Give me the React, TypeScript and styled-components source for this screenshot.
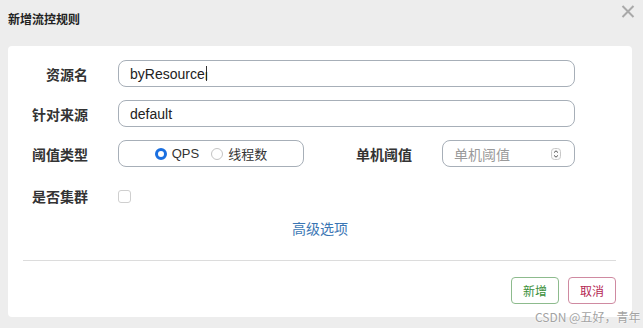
import React from 'react';
import styled, { createGlobalStyle } from 'styled-components';

const GlobalStyle = createGlobalStyle`
  html, body {
    margin: 0;
    padding: 0;
    background: #ededed;
  }
  body {
    font-family: "Liberation Sans", "Noto Sans CJK SC", sans-serif;
    color: #333;
  }
`;

const Dialog = styled.div`
  position: relative;
  width: 643px;
  height: 328px;
  box-sizing: border-box;
  padding: 0 11px 0 8px;
  background: #ededed;
  overflow: hidden;
`;

const Header = styled.div`
  display: flex;
  align-items: flex-start;
  justify-content: space-between;
  height: 46px;
  box-sizing: border-box;
  padding: 10px 0 0 0;
`;

const Title = styled.h4`
  margin: 0;
  font-family: "Noto Sans CJK SC", sans-serif;
  font-size: 12px;
  font-weight: 700;
  color: #222;
  line-height: 17px;
`;

const CloseButton = styled.button`
  display: flex;
  border: none;
  background: none;
  padding: 0;
  margin: -5px -3px 0 0;
  cursor: pointer;
`;

const Panel = styled.div`
  background: #fff;
  border-radius: 4px;
  height: 271px;
  box-sizing: border-box;
  padding: 14px 0 0;
  display: flex;
  flex-direction: column;
`;

const Form = styled.div`
  display: flex;
  flex-direction: column;
  gap: 13px;
`;

const Row = styled.div<{ $top?: number }>`
  display: grid;
  grid-template-columns: 80px 457px;
  column-gap: 30px;
  align-items: center;
  margin-top: ${(p) => p.$top ?? 0}px;
`;

const Label = styled.label<{ $w?: number }>`
  font-family: "Noto Sans CJK SC", sans-serif;
  font-size: 14px;
  font-weight: 600;
  color: #333;
  text-align: right;
  width: ${(p) => (p.$w ? `${p.$w}px` : 'auto')};
  line-height: 20px;
`;

const TextInput = styled.div`
  height: 27px;
  box-sizing: border-box;
  border: 1px solid #a7afb8;
  border-radius: 8px;
  padding: 0 11px;
  display: flex;
  align-items: center;
  font-family: "Liberation Sans", "Noto Sans CJK SC", sans-serif;
  font-size: 14px;
  color: #222;
  font-weight: 500;
`;

const Caret = styled.span`
  display: inline-block;
  width: 1px;
  height: 15px;
  background: #333;
  margin-left: 1px;
`;

const IBeam = styled.span`
  font-family: "DejaVu Sans", sans-serif;
  font-size: 11px;
  color: #222;
  margin: 6px 0 0 -2px;
`;

const InlineGroup = styled.div`
  display: flex;
  align-items: center;
`;

const RadioBox = styled.div`
  width: 186px;
  height: 27px;
  box-sizing: border-box;
  border: 1px solid #a7afb8;
  border-radius: 8px;
  display: flex;
  align-items: center;
  justify-content: center;
  gap: 12px;
`;

const RadioOption = styled.span`
  display: flex;
  align-items: center;
  gap: 5px;
  font-family: "Liberation Sans", "Noto Sans CJK SC", sans-serif;
  font-size: 13px;
  color: #333;
`;

const RadioDot = styled.span<{ $checked?: boolean }>`
  width: 12px;
  height: 12px;
  box-sizing: border-box;
  border-radius: 50%;
  border: ${(p) => (p.$checked ? '3.5px solid #1a6fe0' : '1px solid #c4c4c4')};
  background: #fff;
`;

const NumberInput = styled(TextInput)`
  width: 133px;
  margin-left: 30px;
  justify-content: space-between;
  padding-right: 13px;
  color: #9a9a9a;
  font-family: "Noto Sans CJK SC", sans-serif;
  font-weight: 400;
`;

const Checkbox = styled.span`
  width: 13px;
  height: 13px;
  box-sizing: border-box;
  border: 1px solid #cfcfcf;
  border-radius: 3px;
  background: #fff;
`;

const AdvancedLink = styled.a`
  align-self: center;
  margin-top: 12px;
  font-family: "Noto Sans CJK SC", sans-serif;
  font-size: 14px;
  color: #3a76b4;
  text-decoration: none;
  line-height: 20px;
`;

const Divider = styled.hr`
  border: none;
  border-top: 1px solid #dcdcdc;
  margin: 22px 16px 0 15px;
`;

const Footer = styled.div`
  display: flex;
  justify-content: flex-end;
  gap: 9px;
  padding: 16px 16px 0 0;
`;

const Button = styled.button<{ $tone: 'green' | 'red' }>`
  width: 48px;
  height: 27px;
  box-sizing: border-box;
  border-radius: 4px;
  background: #fff;
  font-family: "Noto Sans CJK SC", sans-serif;
  font-size: 12px;
  padding: 0;
  cursor: pointer;
  color: ${(p) => (p.$tone === 'green' ? '#3a8f3a' : '#b42653')};
  border: 1px solid ${(p) => (p.$tone === 'green' ? '#8dbb8d' : '#cf8aa1')};
`;

const Watermark = styled.span`
  position: absolute;
  left: 535px;
  top: 308px;
  font-family: "Noto Sans CJK SC", sans-serif;
  font-size: 12px;
  color: #a3a3a3;
  text-shadow: 0 0 2px #fff, 0 0 2px #fff;
  white-space: nowrap;
`;

const SpinnerIcon = () => (
  <svg width="10" height="12" viewBox="0 0 10 12">
    <rect x="0.5" y="0.5" width="9" height="11" rx="3" fill="#fafafa" stroke="#c8c8c8" />
    <path d="M3 4.6 L5 2.8 L7 4.6" fill="none" stroke="#555" strokeWidth="1" />
    <path d="M3 7.4 L5 9.2 L7 7.4" fill="none" stroke="#555" strokeWidth="1" />
  </svg>
);

const CloseIcon = () => (
  <svg width="14" height="13" viewBox="0 0 14 13">
    <path d="M1.5 1 L12.5 12 M12.5 1 L1.5 12" stroke="#a9a9a9" strokeWidth="2" />
  </svg>
);

const App: React.FC = () => {
  return (
    <>
      <GlobalStyle />
      <Dialog>
        <Header>
          <Title>新增流控规则</Title>
          <CloseButton aria-label="close">
            <CloseIcon />
          </CloseButton>
        </Header>

        <Panel>
          <Form>
            <Row>
              <Label>资源名</Label>
              <TextInput>
                byResource<Caret />
                <IBeam>I</IBeam>
              </TextInput>
            </Row>
            <Row>
              <Label>针对来源</Label>
              <TextInput>default</TextInput>
            </Row>
            <Row>
              <Label>阈值类型</Label>
              <InlineGroup>
                <RadioBox>
                  <RadioOption>
                    <RadioDot $checked />
                    QPS
                  </RadioOption>
                  <RadioOption>
                    <RadioDot />
                    线程数
                  </RadioOption>
                </RadioBox>
                <Label $w={108}>单机阈值</Label>
                <NumberInput>
                  单机阈值
                  <SpinnerIcon />
                </NumberInput>
              </InlineGroup>
            </Row>
            <Row $top={6}>
              <Label>是否集群</Label>
              <InlineGroup>
                <Checkbox />
              </InlineGroup>
            </Row>
          </Form>

          <AdvancedLink href="#">高级选项</AdvancedLink>
          <Divider />

          <Footer>
            <Button $tone="green">新增</Button>
            <Button $tone="red">取消</Button>
          </Footer>
        </Panel>

        <Watermark>CSDN @五好，青年</Watermark>
      </Dialog>
    </>
  );
};

export default App;
